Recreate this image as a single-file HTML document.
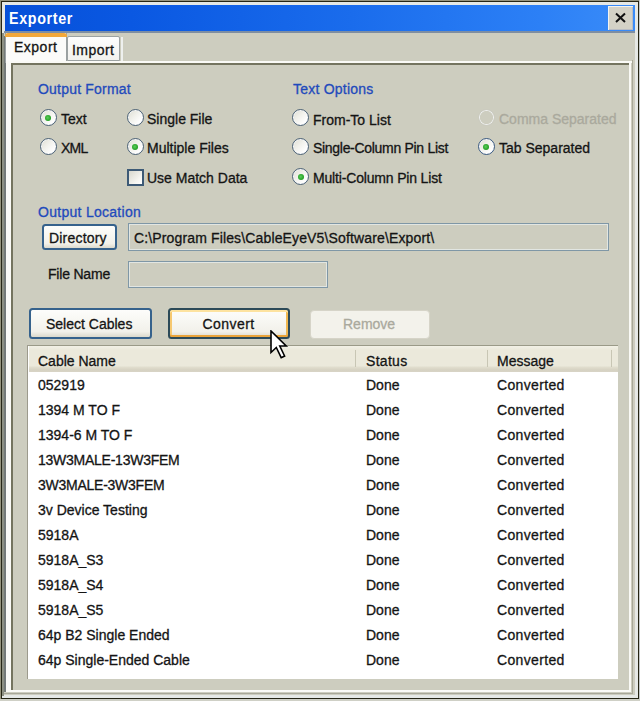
<!DOCTYPE html>
<html><head><meta charset="utf-8">
<style>
html,body{margin:0;padding:0;}
body{width:640px;height:701px;position:relative;overflow:hidden;background:#96947e;font-family:"Liberation Sans",sans-serif;}
.a{position:absolute;}
.t{position:absolute;font-size:14px;line-height:16px;white-space:pre;color:#141414;-webkit-text-stroke:0.3px currentColor;}
.lbl{color:#1f4abc;}
.dis{color:#aaa99d;}
.radio{position:absolute;width:15.2px;height:15.2px;border-radius:50%;border:1.7px solid #4c6276;background:linear-gradient(135deg,#dcdcd2 0%,#f0f0ea 40%,#ffffff 80%);box-shadow:inset 0 0 0 0.8px #f6f8fa;}
.radio.on::after{content:"";position:absolute;left:4.6px;top:4.6px;width:6px;height:6px;border-radius:50%;background:radial-gradient(circle at 45% 45%, #5ccc5c, #189818 80%);}
.btn{position:absolute;border:2px solid #36628c;border-radius:3.5px;background:linear-gradient(#fdfdfb,#f2f1ea 80%,#dcd9cc);box-sizing:border-box;}
</style></head><body>
<!-- window frame -->
<div class="a" style="left:639px;top:0;width:1px;height:701px;background:#c4c8c8;"></div>
<div class="a" style="left:0;top:699px;width:640px;height:2px;background:#cfd0c6;"></div>
<div class="a" style="left:1px;top:1px;width:638px;height:698px;background:#262615;"></div>
<div class="a" style="left:2px;top:2px;width:636px;height:696px;background:#e6e9e6;"></div>
<div class="a" style="left:2px;top:33px;width:2px;height:663px;background:#8d9082;"></div>
<div class="a" style="left:4px;top:33px;width:631px;height:662px;background:#cdcdbf;"></div>
<!-- title bar -->
<div class="a" style="left:5px;top:5px;width:630px;height:26px;background:linear-gradient(90deg,#0650d8 0%,#0a58e2 20%,#1a6cec 55%,#2c80f6 85%,#3a8cf8 100%);"></div>
<div class="a" style="left:4px;top:31px;width:631px;height:2px;background:#7e8ea2;"></div>
<div class="a" style="left:9px;top:7.5px;font-weight:bold;font-size:17px;line-height:22px;color:#fff;white-space:pre;letter-spacing:0.8px;transform:scaleX(0.84);transform-origin:0 0;">Exporter</div>
<!-- close button -->
<div class="a" style="left:608px;top:6px;width:25px;height:24px;background:#d4d2c6;box-shadow:inset 1px 1px 0 #f4f4f0, inset -1px -1px 0 #b8bcc4;"></div>
<svg class="a" style="left:614px;top:11px" width="13" height="13" viewBox="0 0 13 13"><path d="M2 2.5 L11 11 M11 2.5 L2 11" stroke="#111" stroke-width="2"/></svg>

<!-- client area -->
<!-- tab control outer left (slate) -->
<div class="a" style="left:4px;top:36px;width:2px;height:656px;background:#747a78;"></div>
<!-- tabs -->
<div class="a" style="left:67px;top:36.3px;width:53px;height:24.5px;box-sizing:border-box;border:1.2px solid #9ca2a2;border-radius:2px 2px 0 0;background:linear-gradient(#fdfdfd,#f2f2ee);"></div>
<div class="a" style="left:121px;top:37px;width:1.5px;height:24px;background:#eef0ee;"></div>
<div class="a" style="left:5px;top:33px;width:62px;height:30px;box-sizing:border-box;border-left:1px solid #9aa0a0;border-right:1px solid #9aa0a0;background:#fbfbf9;"></div>
<div class="a" style="left:5px;top:33px;width:62px;height:4px;background:#f2a83a;border-radius:3px 3px 0 0;"></div>
<div class="t" style="left:14px;top:39px;letter-spacing:0.5px;">Export</div>
<div class="t" style="left:72px;top:42px;letter-spacing:0.45px;">Import</div>

<!-- tab page ridge -->
<div class="a" style="left:6px;top:61px;width:626px;height:2px;background:#fafaf6;"></div>
<div class="a" style="left:6px;top:62px;width:5px;height:629px;background:#fafaf6;"></div>
<div class="a" style="left:11px;top:63px;width:618px;height:2px;background:#74745f;"></div>
<div class="a" style="left:11px;top:63px;width:2px;height:627px;background:#74745f;"></div>
<div class="a" style="left:629px;top:62px;width:2px;height:629px;background:#fafaf6;"></div>
<div class="a" style="left:6px;top:690px;width:625px;height:2px;background:#fafaf6;"></div>
<div class="a" style="left:632px;top:60px;width:1px;height:634px;background:#a8a898;"></div>
<div class="a" style="left:4px;top:693px;width:629px;height:1px;background:#a8a898;"></div>

<!-- group labels -->
<div class="t lbl" style="left:38px;top:81px;letter-spacing:0.2px;">Output Format</div>
<div class="t lbl" style="left:293px;top:81px;letter-spacing:0.22px;">Text Options</div>
<div class="t lbl" style="left:38px;top:203.5px;letter-spacing:0.28px;">Output Location</div>

<!-- radios -->
<div class="radio on" style="left:39.70px;top:109.00px;"></div><div class="t" style="left:61px;top:111px;">Text</div>
<div class="radio" style="left:39.70px;top:138.20px;"></div><div class="t" style="left:61px;top:140px;letter-spacing:-0.8px;">XML</div>
<div class="radio" style="left:126.50px;top:109.00px;"></div><div class="t" style="left:147px;top:111px;">Single File</div>
<div class="radio on" style="left:126.50px;top:138.20px;"></div><div class="t" style="left:147px;top:140px;">Multiple Files</div>
<div class="a" style="left:127.3px;top:169.3px;width:16.7px;height:16.4px;box-sizing:border-box;border:2px solid #3d5a76;background:linear-gradient(135deg,#d8d8ce,#f6f6f2 70%,#ffffff);"></div><div class="t" style="left:147px;top:170px;">Use Match Data</div>
<div class="radio" style="left:292.10px;top:109.00px;"></div><div class="t" style="left:313px;top:112px;">From-To List</div>
<div class="radio" style="left:292.10px;top:138.20px;"></div><div class="t" style="left:313px;top:140px;letter-spacing:-0.3px;">Single-Column Pin List</div>
<div class="radio on" style="left:292.10px;top:168.30px;"></div><div class="t" style="left:313px;top:170px;letter-spacing:-0.17px;">Multi-Column Pin List</div>
<div class="radio" style="left:477.50px;top:109.00px;border-color:#cbcbc0;background:none;"></div><div class="t dis" style="left:499px;top:111px;">Comma Separated</div>
<div class="radio on" style="left:477.70px;top:138.20px;border-color:#3a5a82;"></div><div class="t" style="left:499px;top:140px;">Tab Separated</div>

<!-- output location -->
<div class="btn" style="left:41.8px;top:224px;width:75px;height:25.5px;"></div>
<div class="t" style="left:49px;top:229.7px;letter-spacing:0.2px;">Directory</div>
<div class="a" style="left:127.5px;top:222.5px;width:481px;height:28px;box-sizing:border-box;border:1.6px solid #7f97a6;background:#cdcdbf;box-shadow:inset 0 0 0 1px #e2e6e2;"></div>
<div class="t" style="left:134px;top:230px;letter-spacing:0.14px;">C:\Program Files\CableEyeV5\Software\Export\</div>
<div class="t" style="left:48px;top:266px;letter-spacing:-0.2px;">File Name</div>
<div class="a" style="left:127.5px;top:260.5px;width:200.5px;height:27px;box-sizing:border-box;border:1.6px solid #7f97a6;background:#cdcdbf;box-shadow:inset 0 0 0 1px #e2e6e2;"></div>

<!-- buttons -->
<div class="btn" style="left:28.5px;top:307.8px;width:123px;height:31.6px;"></div>
<div class="t" style="left:46px;top:316.3px;">Select Cables</div>
<div class="btn" style="left:168.4px;top:307.8px;width:122px;height:31.6px;border-color:#2c4a58;box-shadow:inset 0 2px 0 #fde3a0, inset 0 -2px 0 #eaa43a, inset 2px 0 0 #f6c870, inset -2px 0 0 #f0b850;"></div>
<div class="t" style="left:202.5px;top:316.3px;letter-spacing:0.45px;">Convert</div>
<div class="a" style="left:310px;top:309.5px;width:120px;height:29px;box-sizing:border-box;border:1px solid #d6d4c8;border-radius:4px;background:#f3f2eb;"></div>
<div class="t dis" style="left:343px;top:316.3px;">Remove</div>

<!-- list -->
<div class="a" style="left:27px;top:345px;width:590.5px;height:333.8px;box-sizing:border-box;border-left:1.5px solid #9c9a8c;border-top:1.5px solid #9c9a8c;background:#fff;"></div>
<div class="a" style="left:28.5px;top:345px;width:589px;height:26.8px;box-sizing:border-box;border-top:1.6px solid #9a9a88;background:linear-gradient(#f2f1e6 0%,#ebe9db 15%,#ebe9db 76%,#e0ddcd 82%,#d6d2c2 92%,#d8d4c6 100%);"></div>
<div class="a" style="left:355px;top:350px;width:1px;height:17px;background:#c8c6b4;"></div>
<div class="a" style="left:487px;top:350px;width:1px;height:17px;background:#c8c6b4;"></div>
<div class="a" style="left:611px;top:350px;width:1px;height:17px;background:#c8c6b4;"></div>
<div class="t" style="left:38px;top:353px;">Cable Name</div>
<div class="t" style="left:366px;top:353px;letter-spacing:0.3px;">Status</div>
<div class="t" style="left:497px;top:353px;">Message</div>

<div class="t" style="left:38px;top:377px;">052919</div>
<div class="t" style="left:38px;top:402px;">1394 M TO F</div>
<div class="t" style="left:38px;top:427px;">1394-6 M TO F</div>
<div class="t" style="left:38px;top:452px;letter-spacing:-0.25px;">13W3MALE-13W3FEM</div>
<div class="t" style="left:38px;top:477px;letter-spacing:-0.25px;">3W3MALE-3W3FEM</div>
<div class="t" style="left:38px;top:502px;">3v Device Testing</div>
<div class="t" style="left:38px;top:527px;">5918A</div>
<div class="t" style="left:38px;top:552px;">5918A_S3</div>
<div class="t" style="left:38px;top:577px;">5918A_S4</div>
<div class="t" style="left:38px;top:602px;">5918A_S5</div>
<div class="t" style="left:38px;top:627px;">64p B2 Single Ended</div>
<div class="t" style="left:38px;top:652px;">64p Single-Ended Cable</div>

<div class="t" style="left:366px;top:377px;">Done</div>
<div class="t" style="left:366px;top:402px;">Done</div>
<div class="t" style="left:366px;top:427px;">Done</div>
<div class="t" style="left:366px;top:452px;">Done</div>
<div class="t" style="left:366px;top:477px;">Done</div>
<div class="t" style="left:366px;top:502px;">Done</div>
<div class="t" style="left:366px;top:527px;">Done</div>
<div class="t" style="left:366px;top:552px;">Done</div>
<div class="t" style="left:366px;top:577px;">Done</div>
<div class="t" style="left:366px;top:602px;">Done</div>
<div class="t" style="left:366px;top:627px;">Done</div>
<div class="t" style="left:366px;top:652px;">Done</div>

<div class="t" style="left:497px;top:377px;letter-spacing:0.35px;">Converted</div>
<div class="t" style="left:497px;top:402px;letter-spacing:0.35px;">Converted</div>
<div class="t" style="left:497px;top:427px;letter-spacing:0.35px;">Converted</div>
<div class="t" style="left:497px;top:452px;letter-spacing:0.35px;">Converted</div>
<div class="t" style="left:497px;top:477px;letter-spacing:0.35px;">Converted</div>
<div class="t" style="left:497px;top:502px;letter-spacing:0.35px;">Converted</div>
<div class="t" style="left:497px;top:527px;letter-spacing:0.35px;">Converted</div>
<div class="t" style="left:497px;top:552px;letter-spacing:0.35px;">Converted</div>
<div class="t" style="left:497px;top:577px;letter-spacing:0.35px;">Converted</div>
<div class="t" style="left:497px;top:602px;letter-spacing:0.35px;">Converted</div>
<div class="t" style="left:497px;top:627px;letter-spacing:0.35px;">Converted</div>
<div class="t" style="left:497px;top:652px;letter-spacing:0.35px;">Converted</div>

<!-- cursor -->
<svg class="a" style="left:270px;top:330px" width="20" height="32" viewBox="0 0 20 32"><path d="M1 1 L1 22.5 L6.3 17.5 L11.2 27.6 L14.6 26 L9.8 16 L16.2 16 Z" fill="#fff" stroke="#000" stroke-width="1.6" stroke-linejoin="miter"/></svg>
</body></html>
